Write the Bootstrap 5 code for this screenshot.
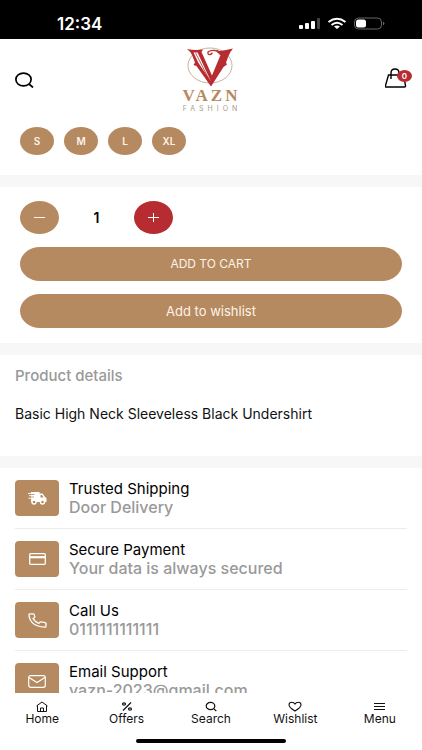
<!DOCTYPE html>
<html lang="en">
<head>
<meta charset="utf-8">
<meta name="viewport" content="width=device-width, initial-scale=1">
<title>VAZN Fashion</title>
<link href="https://cdn.jsdelivr.net/npm/bootstrap@5.3.0/dist/css/bootstrap.min.css" rel="stylesheet">
<style>
:root{--tan:#b68a60;--red:#b62c31;--grey:#999}
body{font-family:Inter,"Noto Sans",sans-serif;color:#111;background:#fff}
svg{display:block;flex:none}
.status{height:39px;padding:8px 36px 0 57px}
.clock{font-size:17px;line-height:24px;font-weight:600}
.top{height:80px;padding:2px 12px 0 10px}
.side{flex:1 1 0;padding-bottom:4px}
.find{margin-left:5px}
.brand{color:var(--tan);text-decoration:none}
.brand-name{font:700 17px/18px "Liberation Serif",serif;letter-spacing:3px;padding-left:3px}
.brand-sub{font-size:7px;line-height:8px;letter-spacing:4px;padding-left:4px;color:#a79a8e}
.count{background:var(--red);width:15px;height:12px;font-size:8px;font-weight:600;line-height:12px;left:12px;top:2px;border-radius:50%}
.sizes{gap:10px;padding:8px 20px 20px}
.btn-tan,.btn-tan:hover{background:var(--tan);color:#fdf3e8}
.size{width:34px;height:28px;border-radius:50%;font-size:10px;font-weight:600;line-height:28px}
.band{height:12px;background:#f7f7f7;flex:none}
.buy{padding:14px 20px 15px}
.step{width:39px;height:33px;border-radius:50%}
.btn-red,.btn-red:hover{background:var(--red);color:#fff}
.qty{width:75px;font-size:14px;font-weight:600;line-height:20px;color:#000}
.wide{height:34px;border-radius:20px/17px;font-size:12px;line-height:18px;margin-top:13px}
.wish{font-size:13px}
.details{padding:12px 15px 33px}
.details h2{font-size:15px;line-height:18px;font-weight:500;color:var(--grey);margin:0 0 20px}
.details p{font-size:14px;line-height:18px;margin:0}
.info{padding:0 15px}
.info li{gap:10px;padding:12px 0;border-bottom:1px solid #ececec}
.tile{width:44px;height:36px;border-radius:4px;background:var(--tan);color:#fff}
.info h3{font-size:15px;line-height:18px;font-weight:400;margin:0;color:#000}
.info p{font-size:16px;line-height:18px;font-weight:500;margin:0;color:var(--grey)}
.dock{height:57px;padding-top:8px}
.dock a{flex:1 1 0;font-size:12px;line-height:14px;color:#111;text-decoration:none}
.grip{width:150px;height:4px;border-radius:2px;margin:13px auto 0;background:#000}
</style>
</head>
<body>
<div class="vh-100 d-flex flex-column overflow-hidden">
  <div class="status bg-black text-white d-flex justify-content-between flex-shrink-0 align-items-start">
    <div class="clock pt-1">12:34</div>
    <svg class="mt-2" width="88" height="16" viewBox="0 0 88 16" fill="#fff">
      <rect x="1" y="9" width="4" height="4" rx="1"/><rect x="7" y="7" width="4" height="6" rx="1"/><rect x="13" y="5" width="4" height="8" rx="1"/><rect x="19" y="2" width="3" height="11" rx="1" fill="#444"/>
      <g fill="none" stroke="#fff" stroke-width="2"><path d="M30.500 6Q39 -.5 47.500 6"/><path d="M33.500 9Q39 4.500 44.500 9"/></g><path d="M36 10.500q3-2.200 6 0L39 13z"/>
      <rect x="56.500" y="2" width="27" height="11" rx="4" fill="none" stroke="#666"/><rect x="58" y="3.500" width="10" height="8" rx="2.500"/><path d="M85 5.500q3 2 0 4z" fill="#666"/>
    </svg>
  </div>

  <header class="top d-flex align-items-center flex-shrink-0">
    <div class="side"><button class="find btn p-0 border-0" aria-label="Search">
      <svg width="19" height="16" viewBox="0 0 19 16" fill="none" stroke="#000" stroke-width="1.700"><ellipse cx="8.500" cy="7.500" rx="7.600" ry="6.400"/><path d="M14 12l4 3.500"/></svg></button></div>
    <a class="brand d-flex flex-column align-items-center" href="#">
      <svg width="48" height="40" viewBox="0 0 48 40"><ellipse cx="24" cy="18.500" rx="22" ry="17.500" fill="none" stroke="#c9b39b"/>
        <path d="M1 2Q8 3.500 17 2.500L15.500 5 26 28.500 34.500 8 30 4.500Q39 3.500 47 1.500 44 5 42.500 9L40 15.500 41 17.500 37.500 20 25 39.500 10.500 19 7.500 18 9 15.500 6 8Q4 4 1 2z" fill="#b62c31"/>
        <path d="M7.500 5.500h4L25 34.500 12.500 16z" fill="#fff"/><path d="M9.500 6L24.500 35" stroke="#b62c31" stroke-width=".8"/>
        <path d="M34.500 8Q34 3.500 29 3.500q-4.500-.5-7 1.500-.5 3 2 2.500 2 0 2-2" fill="none" stroke="#b62c31" stroke-width="1.300"/></svg>
      <span class="brand-name">VAZN</span><span class="brand-sub">FASHION</span>
    </a>
    <div class="side d-flex justify-content-end"><button class="btn p-0 border-0 position-relative text-black" aria-label="Cart">
      <svg width="25" height="20" viewBox="0 0 25 20" fill="none" stroke="#000" stroke-width="1.400"><path d="M3.500 7H18.500l2 10.500q.2 1.500-1 1.500H1Q-.2 19 .5 17.500z"/><path d="M6 11V5q0-4 4-4t4 4v2" /></svg>
      <span class="count position-absolute text-white">0</span></button></div>
  </header>

  <main class="flex-grow-1 overflow-hidden">
    <div class="sizes d-flex">
      <button class="btn btn-tan size p-0 border-0">S</button><button class="btn btn-tan size p-0 border-0">M</button><button class="btn btn-tan size p-0 border-0">L</button><button class="btn btn-tan size p-0 border-0">XL</button>
    </div>
    <div class="band"></div>
    <section class="buy">
      <div class="d-flex align-items-center">
        <button class="btn btn-tan step p-0 border-0 d-flex align-items-center justify-content-center" aria-label="Decrease"><svg width="11" height="11" viewBox="0 0 11 11" stroke="currentColor"><path d="M0 5.500H11"/></svg></button>
        <output class="qty text-center">1</output>
        <button class="btn btn-red step p-0 border-0 d-flex align-items-center justify-content-center" aria-label="Increase"><svg width="11" height="11" viewBox="0 0 11 11" stroke="currentColor"><path d="M0 5.500H11M5.500 1V10"/></svg></button>
      </div>
      <button class="btn btn-tan wide w-100 border-0 p-0">ADD TO CART</button>
      <button class="btn btn-tan wide wish w-100 border-0 p-0">Add to wishlist</button>
    </section>
    <div class="band"></div>
    <section class="details"><h2>Product details</h2><p>Basic High Neck Sleeveless Black Undershirt</p></section>
    <div class="band"></div>
    <ul class="info list-unstyled mb-0">
      <li class="d-flex"><span class="tile d-flex align-items-center justify-content-center">
        <svg width="19" height="14" viewBox="0 0 19 14" fill="currentColor"><path d="M3 1h8.500v1.500h3L17 6l1.500 1v4H3z"/><path d="M12.500 4h1.500l1.500 2.500h-3z" fill="#b68a60"/><path d="M1 3.500h5.500M0 6h6" stroke="#b68a60" stroke-width=".8"/><path d="M0 2.500h4M1 4.700h4M.5 7.300h4" stroke="currentColor" stroke-width=".9"/><g stroke="currentColor" stroke-width="1.400" fill="#b68a60"><circle cx="6" cy="11" r="2"/><circle cx="14.500" cy="11" r="2"/></g></svg></span>
        <div><h3>Trusted Shipping</h3><p>Door Delivery</p></div></li>
      <li class="d-flex"><span class="tile d-flex align-items-center justify-content-center">
        <svg width="17" height="12" viewBox="0 0 17 12" fill="none" stroke="currentColor" stroke-width="1.300"><rect x=".7" y=".7" width="15.600" height="10.600" rx="1"/><path d="M1 4.200H16" stroke-width="2.200"/></svg></span>
        <div><h3>Secure Payment</h3><p>Your data is always secured</p></div></li>
      <li class="d-flex"><span class="tile d-flex align-items-center justify-content-center">
        <svg width="19" height="15" viewBox="0 0 19 15" fill="none" stroke="currentColor" stroke-width="1.300" stroke-linejoin="round"><path d="M2 .8h3.200q.8 0 1 .8l.6 2q.1.600-.5 1L5 5.700q1.800 3 5.800 4.600l1.500-1.200q.5-.4 1.200-.2l3.500.7q1 .2 1 1v2.400q0 1.300-1.500 1.200Q2 13 .9 2 .8.800 2 .8z"/></svg></span>
        <div><h3>Call Us</h3><p>0111111111111</p></div></li>
      <li class="d-flex"><span class="tile d-flex align-items-center justify-content-center">
        <svg width="18" height="13" viewBox="0 0 18 13" fill="none" stroke="currentColor" stroke-width="1.200"><rect x=".7" y=".7" width="16.600" height="11.600" rx="2"/><path d="M1 2.500l8 5 8-5"/></svg></span>
        <div><h3>Email Support</h3><p>vazn-2023@gmail.com</p></div></li>
    </ul>
  </main>

  <footer class="dock bg-white flex-shrink-0">
    <nav class="d-flex">
      <a class="d-flex flex-column align-items-center" href="#"><svg width="12" height="11" viewBox="0 0 12 11" fill="none" stroke="currentColor"><path d="M.5 5L6 1l5.500 4M1.500 4.500v6h9v-6M4.500 10V7h3v3"/></svg>Home</a>
      <a class="d-flex flex-column align-items-center" href="#"><svg width="12" height="11" viewBox="0 0 12 11" fill="none" stroke="currentColor" stroke-width="1.200"><path d="M2 9.500L10 1.500"/><ellipse cx="3" cy="3" rx="1.500" ry="1.200"/><ellipse cx="9" cy="8" rx="1.500" ry="1.200"/></svg>Offers</a>
      <a class="d-flex flex-column align-items-center" href="#"><svg width="12" height="11" viewBox="0 0 12 11" fill="none" stroke="currentColor" stroke-width="1.200"><ellipse cx="5.500" cy="5" rx="4.300" ry="3.600"/><path d="M8.600 7.600l2.700 2.400"/></svg>Search</a>
      <a class="d-flex flex-column align-items-center" href="#"><svg width="14" height="11" viewBox="0 0 14 11" fill="none" stroke="currentColor" stroke-width="1.100"><path d="M7 10Q1 6.500 1 3.800 1 1.200 3.800 1.200 6 1.200 7 3q1-1.800 3.200-1.800Q13 1.200 13 3.800 13 6.500 7 10z"/></svg>Wishlist</a>
      <a class="d-flex flex-column align-items-center" href="#"><svg width="11" height="11" viewBox="0 0 11 11" stroke="currentColor"><path d="M0 2.500H11M0 5.500H11M0 8.500H11"/></svg>Menu</a>
    </nav>
    <div class="grip"></div>
  </footer>
</div>
<script src="https://cdn.jsdelivr.net/npm/bootstrap@5.3.0/dist/js/bootstrap.bundle.min.js"></script>
</body>
</html>
